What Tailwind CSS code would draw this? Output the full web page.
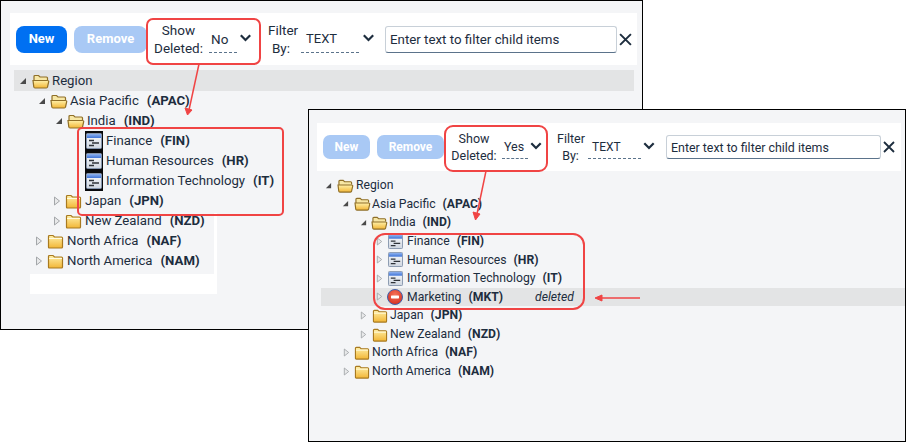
<!DOCTYPE html>
<html lang="en">
<head>
    <meta charset="UTF-8">
    <title>Show Deleted</title>
    <script src="https://cdn.jsdelivr.net/npm/@tailwindcss/browser@4"></script>
</head>
<body class="relative w-[906px] h-[442px] overflow-hidden bg-white font-['Roboto',sans-serif] text-[#1d2d3e]">
    <!-- shared icons -->
    <svg class="absolute w-0 h-0">
        <defs>
            <linearGradient id="fold" x1="0" y1="0" x2="0" y2="1"><stop offset="0" stop-color="#fff0a8"/><stop offset="1" stop-color="#f2b636"/></linearGradient>
            <linearGradient id="head" x1="0" y1="0" x2="0" y2="1"><stop offset="0" stop-color="#8fb2ee"/><stop offset="1" stop-color="#3f74d8"/></linearGradient>
            <linearGradient id="page" x1="0" y1="0" x2="0" y2="1"><stop offset="0" stop-color="#fbfcfe"/><stop offset="1" stop-color="#cfd6e0"/></linearGradient>
            <radialGradient id="stop" cx="0.5" cy="0.35" r="0.7"><stop offset="0" stop-color="#f4735a"/><stop offset="1" stop-color="#d42a1c"/></radialGradient>
            <symbol id="closed" viewBox="0 0 17 16"><path d="M1.500 14V3.500q0-1 1-1h3.500l1.500 1.500h7q1 0 1 1V14q0 1-1 1h-12q-1 0-1-1z" fill="url(#fold)" stroke="#a87a20" stroke-width="1.200"/><path d="M2 5.500h13" stroke="#fffbe0"/></symbol>
            <symbol id="open" viewBox="0 0 18 16"><path d="M2 13V3.500q0-1 1-1h3.500L8 4h6.500q1 0 1 1v2" fill="#f7e7a5" stroke="#8f6f28" stroke-width="1.200"/><path d="M1 7.500h14.500q1.500 0 1.200 1.200L15.500 14q-.2 1-1.200 1H3q-1 0-1.200-1z" fill="url(#fold)" stroke="#8f6f28" stroke-width="1.200"/></symbol>
            <symbol id="doc" viewBox="0 0 16 16"><rect x=".5" y=".5" width="15" height="15" rx="1" fill="url(#page)" stroke="#8494ac"/><rect x="1" y="1" width="14" height="4" fill="url(#head)"/><path d="M3 7.500h5M6 10h7M3 12.500h5" stroke="#30343a" stroke-width="1.300"/></symbol>
            <symbol id="deleted" viewBox="0 0 16 16"><circle cx="8" cy="8" r="7.500" fill="url(#stop)" stroke="#3e62ad"/><rect x="4" y="6.600" width="8" height="2.800" rx=".6" fill="#fff"/></symbol>
            <symbol id="tri-open" viewBox="0 0 8 8"><path d="M7 1v6H1z" fill="#4a4a4a"/></symbol>
            <symbol id="tri-closed" viewBox="0 0 8 10"><path d="M1.500 1l5 4-5 4z" fill="#e8e9ea" stroke="#a4a7aa"/></symbol>
            <symbol id="chevron" viewBox="0 0 12 8"><path d="M1.300 1.300L6 6l4.700-4.700" fill="none" stroke="#1d2d3e" stroke-width="2.200"/></symbol>
            <symbol id="close" viewBox="0 0 12 12"><path d="M1 1l10 10M11 1L1 11" fill="none" stroke="#1d2d3e" stroke-width="1.800"/></symbol>
        </defs>
    </svg>

    <!-- first window -->
    <section class="absolute left-0 top-0 w-[643px] h-[330px] border border-black bg-[#f4f5f7]">
        <div class="ml-[9px] mt-[12px] w-[627px] h-[52px] bg-white flex items-center pl-[6px] text-[13.500px]">
            <button class="w-[51px] h-[27px] rounded-[8px] bg-[#0070f2] text-white font-bold text-[13px]">New</button>
            <button class="ml-[7px] w-[73px] h-[27px] rounded-[8px] bg-[#a9c9f5] text-white font-bold text-[13px]">Remove</button>
            <div class="ml-[7px] w-[49px] text-center leading-[18px]">Show<br>Deleted:</div>
            <div class="ml-[6px] w-[28px] h-[27px] pl-[2px] leading-[26px] border-b border-dashed border-[#5b738b]">No</div>
            <svg class="ml-[2px] w-[13px] h-[8px] -mt-[2px]"><use href="#chevron"/></svg>
            <div class="ml-[16px] w-[26px] text-center leading-[18px]">Filter<br>By:</div>
            <div class="ml-[7px] w-[58px] h-[27px] pl-[5px] leading-[26px] border-b border-dashed border-[#5b738b] text-[13px]">TEXT</div>
            <svg class="ml-[3px] w-[13px] h-[8px] -mt-[2px]"><use href="#chevron"/></svg>
            <input class="ml-[10px] w-[232px] h-[27px] rounded-[3px] border border-[#c8d0d8] border-b-[#5b738b] px-[4px] text-[13.300px] placeholder:text-[#1d2d3e]" placeholder="Enter text to filter child items">
            <svg class="ml-[2px] w-[13px] h-[13px]"><use href="#close"/></svg>
        </div>
        <div class="mt-[5px] ml-[13px] text-[13.200px]">
            <div class="w-[620px] h-[21px] bg-[#e3e4e5] flex items-center pl-[5px]"><svg class="w-[8px] h-[8px]"><use href="#tri-open"/></svg><svg class="ml-[5px] w-[18px] h-[16px]"><use href="#open"/></svg><span class="ml-[2px]">Region</span></div>
            <div class="h-[20px] flex items-center pl-[24px]"><svg class="w-[8px] h-[8px]"><use href="#tri-open"/></svg><svg class="ml-[4px] w-[18px] h-[16px]"><use href="#open"/></svg><span class="ml-[2px]">Asia Pacific</span><b class="ml-[8px]">(APAC)</b></div>
            <div class="h-[20px] flex items-center pl-[41px]"><svg class="w-[8px] h-[8px]"><use href="#tri-open"/></svg><svg class="ml-[4px] w-[18px] h-[16px]"><use href="#open"/></svg><span class="ml-[2px]">India</span><b class="ml-[8px]">(IND)</b></div>
            <div class="h-[20px] flex items-center pl-[71px]"><svg class="w-[18px] h-[20px] bg-[#08090c] px-[1px]"><use href="#doc"/></svg><span class="ml-[3px]">Finance</span><b class="ml-[8px]">(FIN)</b></div>
            <div class="h-[20px] flex items-center pl-[71px]"><svg class="w-[18px] h-[20px] bg-[#08090c] px-[1px]"><use href="#doc"/></svg><span class="ml-[3px]">Human Resources</span><b class="ml-[8px]">(HR)</b></div>
            <div class="h-[20px] flex items-center pl-[71px]"><svg class="w-[18px] h-[20px] bg-[#08090c] px-[1px]"><use href="#doc"/></svg><span class="ml-[3px]">Information Technology</span><b class="ml-[8px]">(IT)</b></div>
            <div class="h-[20px] flex items-center pl-[39px]"><svg class="w-[8px] h-[10px]"><use href="#tri-closed"/></svg><svg class="ml-[4px] w-[17px] h-[16px]"><use href="#closed"/></svg><span class="ml-[3px]">Japan</span><b class="ml-[8px]">(JPN)</b></div>
            <div class="h-[20px] flex items-center pl-[39px]"><svg class="w-[8px] h-[10px]"><use href="#tri-closed"/></svg><svg class="ml-[4px] w-[17px] h-[16px]"><use href="#closed"/></svg><span class="ml-[3px]">New Zealand</span><b class="ml-[8px]">(NZD)</b></div>
            <div class="h-[20px] flex items-center pl-[21px]"><svg class="w-[8px] h-[10px]"><use href="#tri-closed"/></svg><svg class="ml-[4px] w-[17px] h-[16px]"><use href="#closed"/></svg><span class="ml-[3px]">North Africa</span><b class="ml-[8px]">(NAF)</b></div>
            <div class="h-[20px] flex items-center pl-[21px]"><svg class="w-[8px] h-[10px]"><use href="#tri-closed"/></svg><svg class="ml-[4px] w-[17px] h-[16px]"><use href="#closed"/></svg><span class="ml-[3px]">North America</span><b class="ml-[8px]">(NAM)</b></div>
        </div>
        <div class="ml-[29px] mt-[3px] w-[187px] h-[20px] bg-white"></div>
        <div class="absolute left-[213px] top-[212px] w-[3px] h-[62px] bg-white"></div>
    </section>

    <!-- second window -->
    <section class="absolute left-[308px] top-[109px] w-[598px] h-[333px] border border-black bg-[#f4f5f7]">
        <div class="ml-[8px] mt-[13px] w-[584px] h-[48px] bg-white flex items-center pl-[6px] text-[12.500px]">
            <button class="w-[47px] h-[24px] rounded-[7px] bg-[#a9c9f5] text-white font-bold text-[12px]">New</button>
            <button class="ml-[7px] w-[67px] h-[24px] rounded-[7px] bg-[#a9c9f5] text-white font-bold text-[12px]">Remove</button>
            <div class="ml-[7px] w-[46px] text-center leading-[17px]">Show<br>Deleted:</div>
            <div class="ml-[5px] w-[26px] h-[24px] pl-[2px] leading-[24px] border-b border-dashed border-[#5b738b]">Yes</div>
            <svg class="ml-[2px] w-[12px] h-[8px] -mt-[3px]"><use href="#chevron"/></svg>
            <div class="ml-[15px] w-[27px] text-center leading-[17px]">Filter<br>By:</div>
            <div class="ml-[4px] w-[53px] h-[24px] pl-[4px] leading-[24px] border-b border-dashed border-[#5b738b] text-[12px]">TEXT</div>
            <svg class="ml-[2px] w-[12px] h-[8px] -mt-[3px]"><use href="#chevron"/></svg>
            <input class="ml-[11px] w-[215px] h-[24px] rounded-[3px] border border-[#c8d0d8] border-b-[#5b738b] px-[4px] text-[12.400px] placeholder:text-[#1d2d3e]" placeholder="Enter text to filter child items">
            <svg class="ml-[2px] w-[12px] h-[12px]"><use href="#close"/></svg>
        </div>
        <div class="mt-[5px] text-[12.200px]">
            <div class="h-[18.600px] flex items-center pl-[16px]"><svg class="w-[7px] h-[7px]"><use href="#tri-open"/></svg><svg class="ml-[5px] w-[17px] h-[15px]"><use href="#open"/></svg><span class="ml-[2px]">Region</span></div>
            <div class="h-[18.600px] flex items-center pl-[33px]"><svg class="w-[7px] h-[7px]"><use href="#tri-open"/></svg><svg class="ml-[5px] w-[17px] h-[15px]"><use href="#open"/></svg><span class="ml-[1px]">Asia Pacific</span><b class="ml-[7px]">(APAC)</b></div>
            <div class="h-[18.600px] flex items-center pl-[51px]"><svg class="w-[7px] h-[7px]"><use href="#tri-open"/></svg><svg class="ml-[4px] w-[17px] h-[15px]"><use href="#open"/></svg><span class="ml-[1px]">India</span><b class="ml-[7px]">(IND)</b></div>
            <div class="h-[18.600px] flex items-center pl-[67px]"><svg class="w-[7px] h-[9px]"><use href="#tri-closed"/></svg><svg class="ml-[5px] w-[15px] h-[15px]"><use href="#doc"/></svg><span class="ml-[4px]">Finance</span><b class="ml-[7px]">(FIN)</b></div>
            <div class="h-[18.600px] flex items-center pl-[67px]"><svg class="w-[7px] h-[9px]"><use href="#tri-closed"/></svg><svg class="ml-[5px] w-[15px] h-[15px]"><use href="#doc"/></svg><span class="ml-[4px]">Human Resources</span><b class="ml-[7px]">(HR)</b></div>
            <div class="h-[18.600px] flex items-center pl-[67px]"><svg class="w-[7px] h-[9px]"><use href="#tri-closed"/></svg><svg class="ml-[5px] w-[15px] h-[15px]"><use href="#doc"/></svg><span class="ml-[4px]">Information Technology</span><b class="ml-[7px]">(IT)</b></div>
            <div class="ml-[12px] h-[18.600px] bg-[#e3e4e5] flex items-center pl-[55px]"><svg class="w-[7px] h-[9px]"><use href="#tri-closed"/></svg><svg class="ml-[4px] w-[16px] h-[16px]"><use href="#deleted"/></svg><span class="ml-[4px]">Marketing</span><b class="ml-[7px]">(MKT)</b><i class="ml-[32px]">deleted</i></div>
            <div class="h-[18.600px] flex items-center pl-[51px]"><svg class="w-[7px] h-[9px]"><use href="#tri-closed"/></svg><svg class="ml-[5px] w-[16px] h-[15px]"><use href="#closed"/></svg><span class="ml-[2px]">Japan</span><b class="ml-[7px]">(JPN)</b></div>
            <div class="h-[18.600px] flex items-center pl-[51px]"><svg class="w-[7px] h-[9px]"><use href="#tri-closed"/></svg><svg class="ml-[5px] w-[16px] h-[15px]"><use href="#closed"/></svg><span class="ml-[2px]">New Zealand</span><b class="ml-[7px]">(NZD)</b></div>
            <div class="h-[18.600px] flex items-center pl-[34px]"><svg class="w-[7px] h-[9px]"><use href="#tri-closed"/></svg><svg class="ml-[4px] w-[16px] h-[15px]"><use href="#closed"/></svg><span class="ml-[2px]">North Africa</span><b class="ml-[7px]">(NAF)</b></div>
            <div class="h-[18.600px] flex items-center pl-[34px]"><svg class="w-[7px] h-[9px]"><use href="#tri-closed"/></svg><svg class="ml-[4px] w-[16px] h-[15px]"><use href="#closed"/></svg><span class="ml-[2px]">North America</span><b class="ml-[7px]">(NAM)</b></div>
        </div>
    </section>

    <!-- red callouts, over both windows -->
    <div class="absolute left-[146px] top-[18px] w-[115px] h-[47px] rounded-[7px] border-2 border-[#f04444]"></div>
    <div class="absolute left-[77px] top-[127px] w-[207px] h-[89px] rounded-[5px] border-2 border-[#f04444]"></div>
    <div class="absolute left-[444px] top-[125px] w-[104px] h-[47px] rounded-[9px] border-2 border-[#f04444]"></div>
    <div class="absolute left-[373px] top-[233px] w-[212px] h-[77px] rounded-[12px] border-2 border-[#f04444]"></div>
    <svg class="absolute left-0 top-0 w-[906px] h-[442px] pointer-events-none" fill="#f04444" stroke="#f04444">
        <path d="M199 64L189 110" stroke-width="1.500"/><path d="M185 108l7 2-4.500 5z"/>
        <path d="M486 171L477 214" stroke-width="1.500"/><path d="M473 212l7 2-4.500 6z"/>
        <path d="M640 298H600" stroke-width="1.500"/><path d="M595 298l7-3v6z"/>
    </svg>
</body>
</html>
